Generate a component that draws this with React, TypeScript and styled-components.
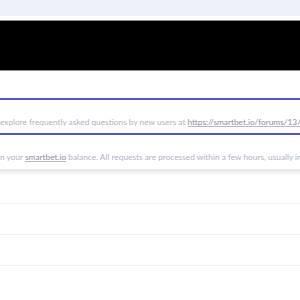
import styled, { createGlobalStyle } from 'styled-components';

const GlobalStyle = createGlobalStyle`
  html, body {
    margin: 0;
    padding: 0;
    background: #fff;
    overflow: hidden;
  }
  body {
    font-family: Lato, "Open Sans", sans-serif;
  }
`;

const Page = styled.div`
  width: 300px;
  height: 300px;
  display: flex;
  flex-direction: column;
  overflow: hidden;
`;

const TopBar = styled.div`
  height: 16px;
  background: #edf1fa;
  flex-shrink: 0;
`;

const Banner = styled.div`
  margin-top: 4px;
  height: 49px;
  background: #000;
  border-top: 1px solid #8c8c8c;
  border-bottom: 1px solid #8c8c8c;
  flex-shrink: 0;
`;

const Notice = styled.div<{ $focused?: boolean; $top: number }>`
  box-sizing: border-box;
  padding-top: ${(p) => p.$top}px;
  height: ${(p) => (p.$focused ? 37 : 34)}px;
  border-top: ${(p) => (p.$focused ? '2px solid #5057cc' : 'none')};
  border-bottom: ${(p) => (p.$focused ? '2px solid #5057cc' : 'none')};
  font-size: 8.3px;
  line-height: 11px;
  color: #b2b2c4;
  white-space: nowrap;
  overflow: hidden;
  flex-shrink: 0;
`;

const Link = styled.span`
  color: #8e8e9c;
  text-decoration: underline;
  text-decoration-color: #b8b8c4;
`;

const Gap = styled.div`
  height: 27px;
  flex-shrink: 0;
`;

const Shade = styled.div`
  height: 7px;
  background: linear-gradient(180deg, #e6e6ec 0%, #f4f4f7 60%, #fff 100%);
  flex-shrink: 0;
`;

const Row = styled.div`
  height: 30px;
  border-bottom: 1px solid #f1f1f4;
  flex-shrink: 0;
`;

const FirstRow = styled(Row)`
  height: 27px;
`;

export default function App() {
  return (
    <>
      <GlobalStyle />
      <Page>
        <TopBar />
        <Banner />
        <Gap />
        <Notice $focused $top={17}>
          explore frequently asked questions by new users at{' '}
          <Link>https://smartbet.io/forums/13/n</Link>
        </Notice>
        <Notice $top={17}>
          n your <Link>smartbet.io</Link> balance. All requests are processed within a few hours, usually ins
        </Notice>
        <Shade />
        <FirstRow />
        <Row />
        <Row />
      </Page>
    </>
  );
}
